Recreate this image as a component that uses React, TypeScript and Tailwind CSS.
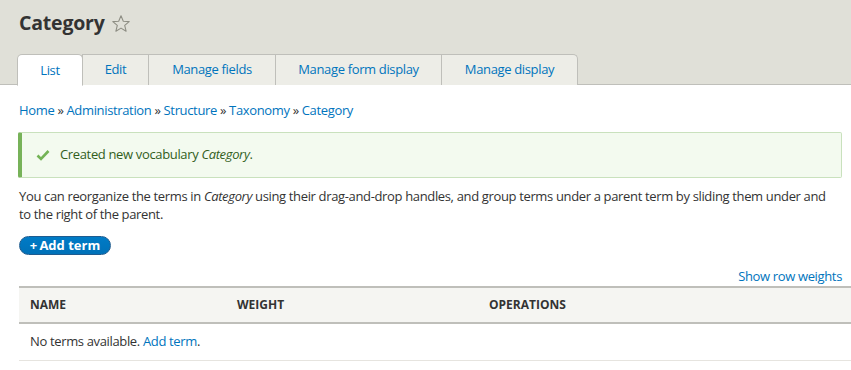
import React from "react";

const font = { fontFamily: '"Open Sans", "Noto Sans", sans-serif' };

function Star() {
  return (
    <svg width="20" height="20" viewBox="0 0 20 20" className="ml-[6px] mt-[2px]">
      <path
        d="M10 1.8 L12.3 7.2 L18.2 7.6 L13.7 11.4 L15.1 17.2 L10 14.1 L4.9 17.2 L6.3 11.4 L1.8 7.6 L7.7 7.2 Z"
        fill="none"
        stroke="#8e8e84"
        strokeWidth="1.1"
        strokeLinejoin="round"
      />
    </svg>
  );
}

function Check() {
  return (
    <svg width="14" height="12" viewBox="0 0 14 12">
      <path d="M1.5 6.5 L5 10 L12.5 2" fill="none" stroke="#73b355" strokeWidth="2.6" />
    </svg>
  );
}

const tabs = ["List", "Edit", "Manage fields", "Manage form display", "Manage display"];
const tabWidths = ["w-[66px]", "w-[67px]", "w-[128px]", "w-[167px]", "w-[137px]"];

export default function App() {
  return (
    <div className="w-[851px] h-[370px] bg-white text-[13px] tracking-[-0.35px] text-[#333]" style={font}>
      <div className="bg-[#e0e0d8] pt-[8px]">
        <div className="flex items-center pl-[19px] h-[30px]">
          <h1 className="text-[19.5px] font-bold text-[#333] leading-none tracking-[-0.2px]">Category</h1>
          <Star />
        </div>
        <div className="flex pl-[17px] mt-[16px] border-b border-[#bfbfba] h-[31px]">
          {tabs.map((t, i) => (
            <div
              key={t}
              className={`${tabWidths[i]} flex items-center justify-center text-[13px] text-[#0074bd] border border-[#bfbfba] ${
                i === 0 ? "bg-white border-b-white h-[32px] rounded-t-[5px] pt-[1px]" : "bg-[#ededE7] -ml-px h-[31px] border-b-0"
              } ${i === 4 ? "rounded-tr-[5px]" : ""}`}
            >
              {t}
            </div>
          ))}
        </div>
      </div>
      <div className="pl-[19px] pr-[9px]">
        <div className="mt-[16px] text-[#0074bd] leading-[18px]">
          Home <span className="text-[#333]">»</span> Administration <span className="text-[#333]">»</span> Structure{" "}
          <span className="text-[#333]">»</span> Taxonomy <span className="text-[#333]">»</span> Category
        </div>
        <div className="mt-[13px] -ml-px flex items-center h-[46px] bg-[#f3faef] border border-[#c9e1bd] border-l-[4px] border-l-[#77b259] rounded-[2px] pl-[14px] text-[#325e1c]">
          <Check />
          <span className="ml-[10px]">
            Created new vocabulary <em>Category</em>.
          </span>
        </div>
        <p className="mt-[9px] leading-[18px] text-[#333] pr-[8px]">
          You can reorganize the terms in <em>Category</em> using their drag-and-drop handles, and group terms under a parent term by sliding them under and to the right of the parent.
        </p>
        <div className="mt-[13px]">
          <span className="inline-flex items-center justify-center w-[92px] h-[19px] rounded-full bg-gradient-to-b from-[#007bc6] to-[#0071b8] border border-[#1e5c90] text-white font-bold text-[13px] leading-none tracking-normal">
            +&thinsp;Add term
          </span>
        </div>
        <div className="mt-[11px] text-right text-[#0074bd] leading-[18px]">Show row weights</div>
        <div className="mt-[1px] -mr-[9px]">
          <div className="flex items-center h-[38px] bg-[#f5f5f2] border-t-2 border-b-2 border-[#bfbfba] text-[12px] font-bold text-[#333] uppercase tracking-normal">
            <div className="w-[218px] pl-[11px]">Name</div>
            <div className="w-[252px]">Weight</div>
            <div>Operations</div>
          </div>
          <div className="flex items-center h-[37px] border-b border-[#e6e4df] pl-[11px]">
            No terms available.&nbsp;<span className="text-[#0074bd]">Add term</span>.
          </div>
        </div>
      </div>
    </div>
  );
}
